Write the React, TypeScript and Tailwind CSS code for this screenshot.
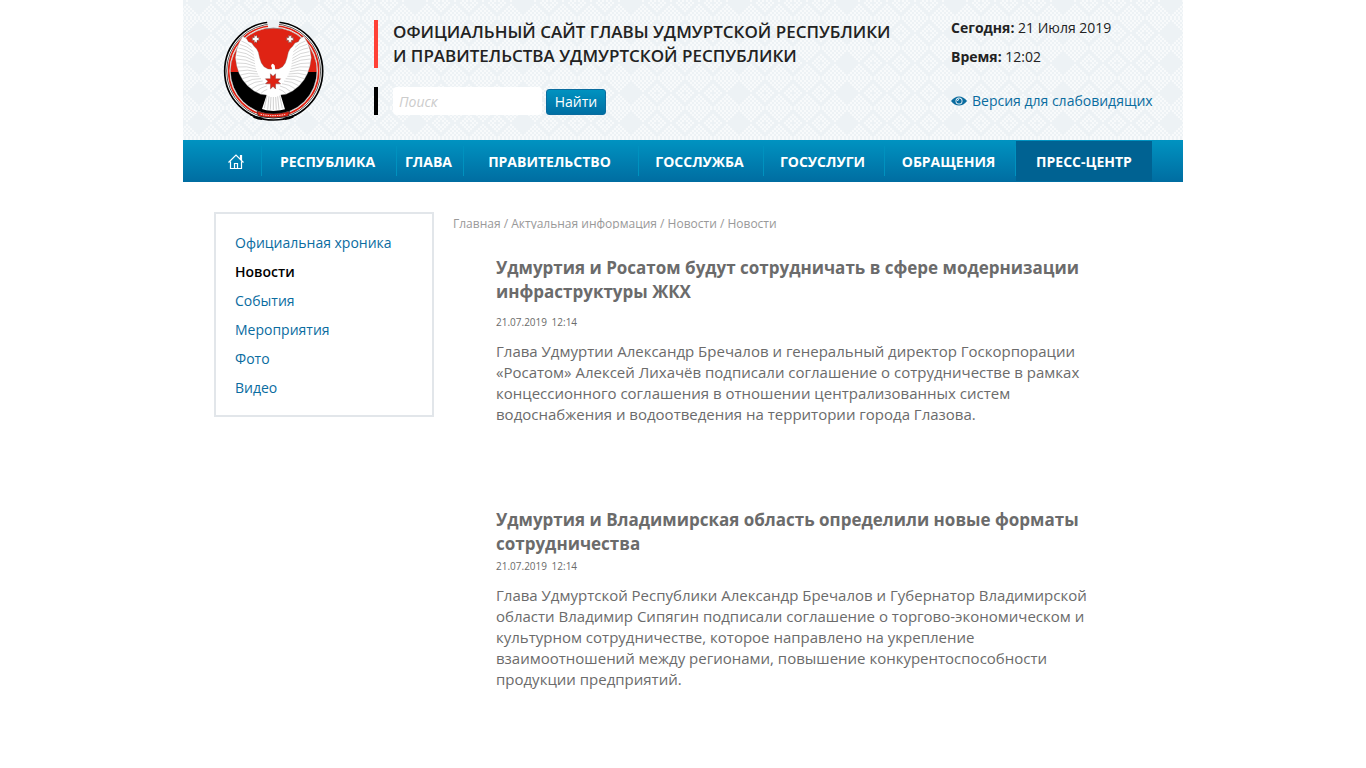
import React from "react";

const TILE_COLS = 54;
const TILE_ROWS = 15;

function buildOrnament(): string {
  let d = "";
  for (let x = 0; x < TILE_COLS; x++) {
    for (let y = 0; y < TILE_ROWS; y++) {
      const dx = x - 27;
      const dy = Math.abs(y - 7);
      const parity = (Math.abs(dx) + dy) % 2 === 0;
      const blank = Math.min(x, TILE_COLS - x) + dy < 7;
      const ring = Math.min(Math.abs(dx), Math.abs(Math.abs(dx) - 14)) + dy;
      const gap = ring === 6 || ring < 2;
      if (parity && !blank && !gap) d += `M${x * 2} ${y * 2}h2v2h-2z`;
    }
  }
  return d;
}

const ORNAMENT = buildOrnament();

function Ornament() {
  return (
    <svg className="absolute inset-0 h-full w-full" aria-hidden="true">
      <defs>
        <pattern id="ornament" width="108" height="30" x="447" y="18" patternUnits="userSpaceOnUse">
          <path d={ORNAMENT} fill="#f8fafb" shapeRendering="crispEdges" />
        </pattern>
      </defs>
      <rect width="100%" height="100%" fill="url(#ornament)" />
    </svg>
  );
}

const STAR =
  "M-4 -12L0 -8L4 -12V-4H12L8 0L12 4H4V12L0 8L-4 12V4H-12L-8 0L-12 -4H-4Z";

function Wing() {
  return (
    <g>
      <path
        d="M74 64L86 71L91 80L101 84L108 94L116 102L121 112L125 129L130 144L138 155L150 162L170 163V262L145 240L128 238L108 228L89 213L74 195L63 175L56 153L52 128L56 104L63 84Z"
        fill="#fff"
        stroke="#777"
        strokeWidth="1"
      />
      <g fill="none" stroke="#9a9a9a" strokeWidth="1.2">
        <path d="M70 78Q88 84 101 97M65 88Q88 93 106 110M61 99Q88 103 108 121M58 110Q86 112 109 130M56 121Q84 122 110 138M55 132Q84 132 111 146M56 144Q84 142 112 154M58 156Q86 152 114 162M62 168Q88 162 117 170M67 180Q91 171 120 177M73 191Q96 180 124 184M81 202Q102 190 129 191M90 212Q109 199 134 198M101 221Q118 208 140 206M114 230Q128 217 146 213M128 236Q137 226 150 222" />
      </g>
    </g>
  );
}

function Emblem() {
  return (
    <svg viewBox="0 0 336 336" className="h-28 w-28" role="img" aria-label="Герб Удмуртской Республики">
      <defs>
        <clipPath id="disc">
          <circle cx="167" cy="168" r="129" />
        </clipPath>
      </defs>
      <circle cx="167" cy="168" r="147" fill="#fff" />
      <g fill="none">
        <circle cx="167" cy="168" r="147" stroke="#000" strokeWidth="5" />
        <circle cx="167" cy="168" r="141" stroke="#000" strokeWidth="2" />
        <circle cx="167" cy="168" r="135" stroke="#df2314" strokeWidth="5" />
        <circle cx="167" cy="168" r="130" stroke="#999" strokeWidth="2" />
      </g>
      <g clipPath="url(#disc)">
        <path d="M36 40H298V171H36Z" fill="#df2314" />
        <path d="M36 171H298V300H36Z" fill="#000" />
      </g>
      <path d="M146 14H186L181 39H151Z" fill="#edf2f5" />
      <path d="M143 42Q166 36 190 42" stroke="#777" strokeWidth="2" fill="none" />
      <Wing />
      <g transform="translate(332 0) scale(-1 1)">
        <Wing />
      </g>
      <path
        d="M148 164L160 166L162 160L159 153Q162 144 166 147Q172 151 171 158L172 166L184 164V232L188 240L201 283L187 286L166 288L145 286L132 282L146 240L148 232Z"
        fill="#fff"
      />
      <path
        d="M147 242L139 279M153 244L149 284M159 246L157 284M166 246V286M173 246L175 284M179 244L183 284M185 242L193 280"
        fill="none"
        stroke="#888"
        strokeWidth="1.200"
      />
      <path d={STAR} transform="translate(113 72)" fill="#fff" stroke="#444" strokeWidth="1" />
      <path d={STAR} transform="translate(216 72)" fill="#fff" stroke="#444" strokeWidth="1" />
      <path d={STAR} transform="translate(165 199) scale(1.9)" fill="#df2314" stroke="#633" strokeWidth=".6" />
      <path d="M117 289Q166 303 215 289L211 303Q166 314 121 303Z" fill="#df2314" stroke="#222" strokeWidth="2" />
      <path d="M128 298Q166 306 204 298" fill="none" stroke="#fff" strokeWidth="3" strokeDasharray="4 3" />
      <path
        d="M97 299Q114 308 136 310M106 306Q119 313 132 313M235 299Q218 308 196 310M226 306Q213 313 200 313"
        fill="none"
        stroke="#000"
        strokeWidth="4"
      />
    </svg>
  );
}

function EyeIcon() {
  return (
    <svg viewBox="0 0 16 10" className="h-[10px] w-4" aria-hidden="true">
      <path d="M0 5Q3.500 .5 8 .5T16 5Q12.500 9.500 8 9.500T0 5Z" fill="#0a6c9f" />
      <circle cx="8" cy="5" r="3.500" fill="#edf2f5" />
      <circle cx="8" cy="5" r="2.600" fill="#0a6c9f" />
      <path d="M8 3.500A1.500 1.500 0 0 0 6.500 5" stroke="#edf2f5" fill="none" />
    </svg>
  );
}

function HomeIcon() {
  return (
    <svg viewBox="0 0 16 16" className="h-4 w-4" fill="none" stroke="#fff" strokeWidth="1.200" aria-hidden="true">
      <path d="M.5 8.500L8 1L15.500 8.500M12.500 5.500V1.500H13.500V6.500M2.500 7.500V14.500H13.500V7.500M6.500 14.500V9.500H9.500V14.500" />
    </svg>
  );
}

const NAV = [
  { label: "РЕСПУБЛИКА", width: "w-[135px]" },
  { label: "ГЛАВА", width: "w-[67px]" },
  { label: "ПРАВИТЕЛЬСТВО", width: "w-[175px]" },
  { label: "ГОССЛУЖБА", width: "w-[125px]" },
  { label: "ГОСУСЛУГИ", width: "w-[121px]" },
  { label: "ОБРАЩЕНИЯ", width: "w-[131px]" },
];

const SECTIONS = ["Официальная хроника", "Новости", "События", "Мероприятия", "Фото", "Видео"];
const CRUMBS = ["Главная", "Актуальная информация", "Новости", "Новости"];

function Header() {
  return (
    <header className="relative bg-[#edf2f5]">
      <Ornament />
      <div className="relative flex h-[140px] items-start">
        <a href="#" className="ml-[35px] mt-[15px] shrink-0">
          <Emblem />
        </a>
        <div className="ml-11 mt-5 grow">
          <h1 className="border-l-4 border-[#ff4136] pl-[15px] text-[17px] leading-6 font-semibold whitespace-nowrap">
            ОФИЦИАЛЬНЫЙ САЙТ ГЛАВЫ УДМУРТСКОЙ РЕСПУБЛИКИ
            <br />И ПРАВИТЕЛЬСТВА УДМУРТСКОЙ РЕСПУБЛИКИ
          </h1>
          <form className="mt-[19px] flex h-7 items-center gap-1 border-l-4 border-black pl-[15px]" onSubmit={(e) => e.preventDefault()}>
            <input
              type="search"
              aria-label="Поиск"
              placeholder="Поиск"
              className="h-7 w-[149px] rounded-sm bg-white px-1.5 text-sm placeholder:text-[#ccc] placeholder:italic"
            />
            <button className="mt-0.5 h-[26px] w-[60px] rounded-[3px] border border-[#0a6c9f] bg-linear-to-b from-[#0092c0] to-[#006fa3] text-sm text-white">
              Найти
            </button>
          </form>
        </div>
        <div className="mt-[13px] w-[232px] shrink-0 text-sm leading-[29px]">
          <p>
            <b>Сегодня:</b> 21 Июля 2019
          </p>
          <p>
            <b>Время:</b> 12:02
          </p>
          <a href="#" className="mt-[15px] flex items-center gap-[5px] whitespace-nowrap text-[#0a6c9f]">
            <EyeIcon />
            Версия для слабовидящих
          </a>
        </div>
      </div>
    </header>
  );
}

function Nav() {
  return (
    <nav className="flex h-[42px] items-center bg-linear-to-b from-[#0093c1] to-[#006da1] pl-[27px] text-sm font-bold text-white">
      <a href="#" aria-label="Главная" className="flex h-[30px] w-[52px] items-center justify-center border-r border-[#0092bf] pt-0.5">
        <HomeIcon />
      </a>
      {NAV.map((item) => (
        <a key={item.label} href="#" className={`flex h-[30px] items-center justify-center border-r border-[#0092bf] pt-0.5 pr-[3px] ${item.width}`}>
          {item.label}
        </a>
      ))}
      <a href="#" aria-current="page" className="flex h-10 w-[136px] items-center justify-center bg-[#006292] pt-0.5">
        ПРЕСС-ЦЕНТР
      </a>
    </nav>
  );
}

function Article({ title, gap, children }: { title: string; gap: string; children: React.ReactNode }) {
  return (
    <article className="max-w-[600px] text-[#6b6b6b]">
      <h2 className="text-[17px] leading-6 font-bold">{title}</h2>
      <p className={`text-[10px] leading-4 ${gap}`}>
        <time>
          21.07.2019 <span className="ml-0.5">12:14</span>
        </time>
      </p>
      <p className="mt-[11px] text-[15px] leading-[21px]">{children}</p>
    </article>
  );
}

export default function App() {
  return (
    <div className="min-h-screen bg-white font-['Open_Sans','Noto_Sans',sans-serif] text-[#222]">
      <div className="mx-auto max-w-[1000px]">
        <Header />
        <Nav />
        <div className="flex items-start pt-[30px] pl-[31px]">
          <aside className="w-[220px] shrink-0 border-2 border-[#e2e6ea] px-[19px] pt-[14px] pb-[13px]">
            <ul className="text-sm leading-[29px]">
              {SECTIONS.map((name) => (
                <li key={name}>
                  <a href="#" className={name === "Новости" ? "font-semibold text-black" : "text-[#0a6c9f]"}>
                    {name}
                  </a>
                </li>
              ))}
            </ul>
          </aside>
          <main className="ml-[19px] min-w-0 grow">
            <div className="h-[17px] overflow-hidden text-xs leading-6 text-[#999]">
              {CRUMBS.map((name, i) => (
                <React.Fragment key={i}>
                  {i > 0 && " / "}
                  <a href="#">{name}</a>
                </React.Fragment>
              ))}
            </div>
            <div className="mt-[27px] flex flex-col gap-[83px] pl-[43px]">
              <Article title="Удмуртия и Росатом будут сотрудничать в сфере модернизации инфраструктуры ЖКХ" gap="mt-[10px]">
                Глава Удмуртии Александр Бречалов и генеральный директор Госкорпорации «Росатом» Алексей Лихачёв подписали
                соглашение о сотрудничестве в рамках концессионного соглашения в отношении централизованных систем водоснабжения
                и водоотведения на территории города Глазова.
              </Article>
              <Article title="Удмуртия и Владимирская область определили новые форматы сотрудничества" gap="mt-0.5">
                Глава Удмуртской Республики Александр Бречалов и Губернатор Владимирской области Владимир Сипягин подписали
                соглашение о торгово-экономическом и культурном сотрудничестве, которое направлено на укрепление
                взаимоотношений между регионами, повышение конкурентоспособности продукции предприятий.
              </Article>
            </div>
          </main>
        </div>
      </div>
    </div>
  );
}
